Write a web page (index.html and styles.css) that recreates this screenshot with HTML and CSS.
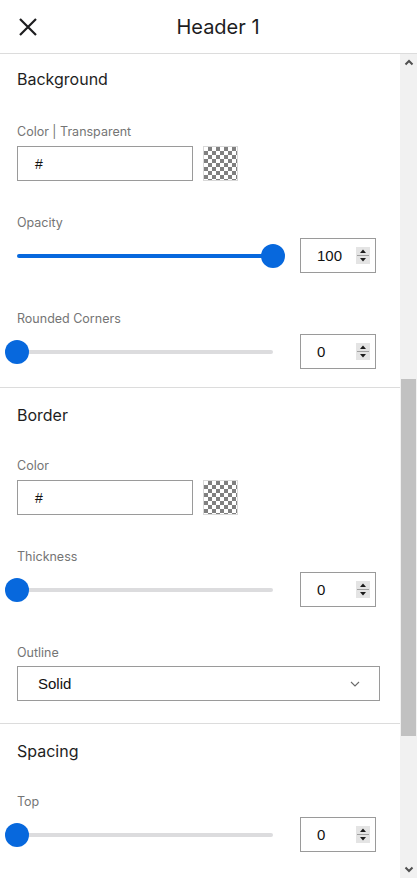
FILE: index.html
```html
<!DOCTYPE html>
<html lang="en">
<head>
<meta charset="utf-8">
<title>Header 1</title>
<link rel="stylesheet" href="styles.css">
</head>
<body>
<div class="panel">
  <header class="topbar">
    <button class="close" aria-label="Close">
      <svg width="20" height="20" viewBox="0 0 20 20"><path d="M2 2 L18 18 M18 2 L2 18" stroke="#1d1d1f" stroke-width="2.2" fill="none"/></svg>
    </button>
    <h1 class="title">Header 1</h1>
  </header>
  <div class="body">
    <div class="content">
      <section class="section">
        <h2 class="section-title">Background</h2>
        <div class="field color">
          <div class="label">Color | Transparent</div>
          <div class="row">
            <div class="text-input">#</div>
            <div class="swatch"></div>
          </div>
        </div>
        <div class="field range">
          <div class="label">Opacity</div>
          <div class="row range-row">
            <div class="slider full"><div class="track"></div><div class="knob"></div></div>
            <div class="num-input"><span class="num">100</span><span class="spin"><svg width="14" height="17" viewBox="0 0 14 17"><rect x="0" y="0" width="14" height="17" fill="#e4e4e4"/><line x1="1" y1="8.5" x2="13" y2="8.5" stroke="#a0a0a0" stroke-width="1"/><path d="M7 2.5 L10 6 L4 6 Z" fill="#1b1b1b"/><path d="M7 14.5 L10 11 L4 11 Z" fill="#1b1b1b"/></svg></span></div>
          </div>
        </div>
        <div class="field range">
          <div class="label">Rounded Corners</div>
          <div class="row range-row">
            <div class="slider"><div class="track"></div><div class="knob"></div></div>
            <div class="num-input"><span class="num">0</span><span class="spin"><svg width="14" height="17" viewBox="0 0 14 17"><rect x="0" y="0" width="14" height="17" fill="#e4e4e4"/><line x1="1" y1="8.5" x2="13" y2="8.5" stroke="#a0a0a0" stroke-width="1"/><path d="M7 2.5 L10 6 L4 6 Z" fill="#1b1b1b"/><path d="M7 14.5 L10 11 L4 11 Z" fill="#1b1b1b"/></svg></span></div>
          </div>
        </div>
      </section>
      <section class="section">
        <h2 class="section-title">Border</h2>
        <div class="field color">
          <div class="label">Color</div>
          <div class="row">
            <div class="text-input">#</div>
            <div class="swatch"></div>
          </div>
        </div>
        <div class="field range">
          <div class="label">Thickness</div>
          <div class="row range-row">
            <div class="slider"><div class="track"></div><div class="knob"></div></div>
            <div class="num-input"><span class="num">0</span><span class="spin"><svg width="14" height="17" viewBox="0 0 14 17"><rect x="0" y="0" width="14" height="17" fill="#e4e4e4"/><line x1="1" y1="8.5" x2="13" y2="8.5" stroke="#a0a0a0" stroke-width="1"/><path d="M7 2.5 L10 6 L4 6 Z" fill="#1b1b1b"/><path d="M7 14.5 L10 11 L4 11 Z" fill="#1b1b1b"/></svg></span></div>
          </div>
        </div>
        <div class="field select-field">
          <div class="label">Outline</div>
          <div class="select">
            <span class="select-value">Solid</span>
            <svg width="10" height="6" viewBox="0 0 10 6"><path d="M1 1 L5 5 L9 1" stroke="#6a6a6a" stroke-width="1.1" fill="none"/></svg>
          </div>
        </div>
      </section>
      <section class="section">
        <h2 class="section-title">Spacing</h2>
        <div class="field range">
          <div class="label">Top</div>
          <div class="row range-row">
            <div class="slider"><div class="track"></div><div class="knob"></div></div>
            <div class="num-input"><span class="num">0</span><span class="spin"><svg width="14" height="17" viewBox="0 0 14 17"><rect x="0" y="0" width="14" height="17" fill="#e4e4e4"/><line x1="1" y1="8.5" x2="13" y2="8.5" stroke="#a0a0a0" stroke-width="1"/><path d="M7 2.5 L10 6 L4 6 Z" fill="#1b1b1b"/><path d="M7 14.5 L10 11 L4 11 Z" fill="#1b1b1b"/></svg></span></div>
          </div>
        </div>
      </section>
    </div>
    <div class="scrollbar">
      <div class="sb-arrow"><svg width="10" height="7" viewBox="0 0 10 7"><path d="M1.5 5.5 L5 2 L8.5 5.5" stroke="#505050" stroke-width="2" fill="none"/></svg></div>
      <div class="sb-track"><div class="sb-thumb"></div></div>
      <div class="sb-arrow"><svg width="10" height="7" viewBox="0 0 10 7"><path d="M1.5 1.5 L5 5 L8.5 1.5" stroke="#505050" stroke-width="2" fill="none"/></svg></div>
    </div>
  </div>
</div>
</body>
</html>
```

FILE: styles.css
```css
* { box-sizing: border-box; }
html, body { margin: 0; padding: 0; background: #fff; }
body { font-family: Inter, "Noto Sans", sans-serif; color: #1e1e1e; }

.panel {
  width: 417px;
  height: 878px;
  display: flex;
  flex-direction: column;
  overflow: hidden;
}

.topbar {
  height: 54px;
  flex: none;
  display: flex;
  align-items: center;
  border-bottom: 1px solid #dcdcdc;
  padding-right: 37px;
}
.close {
  width: 56px;
  height: 53px;
  padding: 0 0 0 18px;
  margin: 0;
  border: 0;
  background: none;
  display: flex;
  align-items: center;
  justify-content: flex-start;
}
.title {
  flex: 1;
  margin: 0;
  text-align: center;
  font-size: 20px;
  font-weight: 400;
  line-height: 24px;
  color: #1d1d1f;
}

.body {
  flex: 1;
  display: flex;
  min-height: 0;
}
.content {
  flex: 1;
  min-width: 0;
  overflow: hidden;
}

.section {
  padding: 17px 20px 18px 17px;
  border-bottom: 1px solid #dcdcdc;
}
.section:first-child { padding-top: 15px; }
.section:last-child { border-bottom: 0; }
.section-title {
  margin: 0 0 33px;
  font-size: 16px;
  font-weight: 400;
  line-height: 20px;
  color: #1e1e1e;
}
.section:first-child .section-title { margin-bottom: 35px; }

.field + .field { margin-top: 34px; }
.field.range + .field.range { margin-top: 38px; }
.field.range + .field.select-field { margin-top: 38px; }
.select-field { padding-bottom: 4px; }

.label {
  font-size: 12.5px;
  line-height: 16px;
  color: #757575;
  margin-bottom: 7px;
}
.field.color .label { margin-bottom: 6px; }
.field.select-field .label { margin-bottom: 5px; }

.row {
  display: flex;
  align-items: center;
  gap: 10px;
}
.range-row { gap: 27px; }

.text-input {
  width: 176px;
  height: 35px;
  border: 1px solid #9a9a9a;
  padding-left: 17px;
  display: flex;
  align-items: center;
  font-family: "Liberation Sans", Arial, sans-serif;
  font-size: 14px;
  color: #111;
}
.swatch {
  width: 35px;
  height: 35px;
  border: 1px solid #d8d8d8;
  background: conic-gradient(#808080 25%, #ffffff 0 50%, #808080 0 75%, #ffffff 0) 0 0 / 8px 8px;
}

.slider {
  position: relative;
  width: 256px;
  height: 24px;
  display: flex;
  align-items: center;
}
.track {
  width: 100%;
  height: 4px;
  border-radius: 2px;
  background: #dcdcde;
}
.slider.full .track { background: #0768dd; }
.knob {
  position: absolute;
  top: 0;
  left: -12px;
  width: 24px;
  height: 24px;
  border-radius: 50%;
  background: #0768dd;
}
.slider.full .knob { left: auto; right: -12px; }

.num-input {
  width: 76px;
  height: 35px;
  border: 1px solid #9a9a9a;
  display: flex;
  align-items: center;
  justify-content: space-between;
  padding: 0 5px 0 16px;
  font-family: "Liberation Sans", Arial, sans-serif;
  font-size: 15px;
  color: #111;
}
.spin { display: flex; }

.select {
  width: 363px;
  height: 35px;
  border: 1px solid #9a9a9a;
  display: flex;
  align-items: center;
  justify-content: space-between;
  padding: 0 19px 0 20px;
  font-family: "Liberation Sans", Arial, sans-serif;
  font-size: 15px;
  color: #111;
}
.select svg { display: block; }

.scrollbar {
  width: 17px;
  flex: none;
  background: #f1f1f1;
  display: flex;
  flex-direction: column;
}
.sb-arrow {
  height: 17px;
  flex: none;
  display: flex;
  align-items: center;
  justify-content: center;
}
.sb-track {
  flex: 1;
  display: flex;
  flex-direction: column;
  padding: 0 1px;
}
.sb-thumb {
  margin-top: 308px;
  height: 357px;
  background: #c1c1c1;
}
```
